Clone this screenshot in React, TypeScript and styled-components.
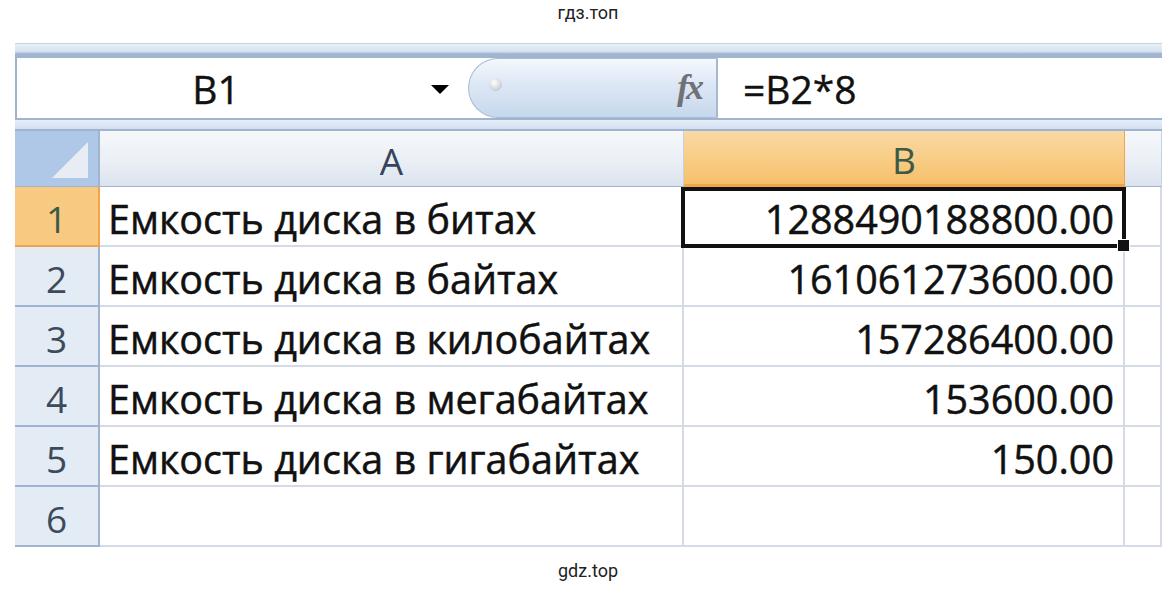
import styled, { createGlobalStyle } from 'styled-components';

const Global = createGlobalStyle`
  html, body {
    margin: 0;
    padding: 0;
    background: #fff;
  }
  body {
    font-family: "Open Sans", "Liberation Sans", sans-serif;
  }
`;

const Page = styled.div`
  width: 1176px;
  height: 590px;
  display: flex;
  flex-direction: column;
  overflow: hidden;
`;

const Watermark = styled.div`
  height: 43px;
  display: flex;
  justify-content: center;
  padding-top: 2px;
  box-sizing: border-box;
  font-family: Roboto, "Liberation Sans", sans-serif;
  font-size: 18px;
  color: #222;
`;

const Footer = styled.div`
  flex: 1;
  display: flex;
  justify-content: center;
  padding-top: 13px;
  box-sizing: border-box;
  font-family: Roboto, "Liberation Sans", sans-serif;
  font-size: 18px;
  color: #222;
`;

const Sheet = styled.div`
  margin-left: 15px;
  width: 1147px;
  display: flex;
  flex-direction: column;
`;

const TopStrip = styled.div`
  height: 15px;
  background: linear-gradient(#e9f0f9 0%, #d4e0ef 55%, #9fb4cf 70%, #9fb4cf 100%);
  border-top: 1px solid #c3d2e5;
  box-sizing: border-box;
`;

const FormulaRow = styled.div`
  height: 60px;
  display: flex;
  background: #fff;
  border-left: 2px solid #9fb4cf;
  box-sizing: border-box;
`;

const NameBox = styled.div`
  width: 451px;
  display: flex;
  align-items: center;
  box-sizing: border-box;
  font-size: 39px;
  color: #111;
  -webkit-text-stroke: 0.4px #111;
`;

const NameText = styled.div`
  width: 398px;
  text-align: center;
`;

const Arrow = styled.div`
  width: 0;
  height: 0;
  margin-left: 16px;
  margin-top: 2px;
  border-left: 9px solid transparent;
  border-right: 9px solid transparent;
  border-top: 9px solid #000;
`;

const Pill = styled.div`
  width: 250px;
  display: flex;
  align-items: center;
  justify-content: space-between;
  padding: 0 12px 0 20px;
  box-sizing: border-box;
  border-radius: 30px 0 0 30px;
  border: 1px solid #a9bcd5;
  border-right: 2px solid #a5b8d0;
  background: linear-gradient(#f4f8fd 0%, #dfe9f6 40%, #c6d7ec 100%);
`;

const Knob = styled.div`
  width: 13px;
  height: 13px;
  border-radius: 50%;
  margin-top: -8px;
  background: radial-gradient(circle at 40% 35%, #ffffff 0%, #d6d9de 55%, #a9afb8 100%);
`;

const Fx = styled.div`
  font-family: "Liberation Serif", "DejaVu Serif", serif;
  font-style: italic;
  font-weight: bold;
  font-size: 36px;
  letter-spacing: -3px;
  padding-right: 3px;
  color: #707276;
  margin-top: -2px;
`;

const FormulaText = styled.div`
  flex: 1;
  display: flex;
  align-items: center;
  padding-left: 25px;
  font-size: 39px;
  color: #111;
  -webkit-text-stroke: 0.4px #111;
`;

const Band = styled.div`
  height: 13px;
  border-top: 2px solid #9fb4cf;
  border-bottom: 2px solid #9fb4cf;
  background: linear-gradient(#e6eef8, #d2dff0);
  box-sizing: border-box;
`;

const Grid = styled.div`
  display: grid;
  grid-template-columns: 85px 584px 441px 37px;
  grid-template-rows: 56px repeat(6, 60px);
`;

const Corner = styled.div`
  position: relative;
  background: #b0c8e8;
  border-right: 2px solid #9fb4cf;
  border-bottom: 1px solid #9fb4cf;
  box-sizing: border-box;
  &::after {
    content: '';
    position: absolute;
    right: 10px;
    bottom: 8px;
    width: 0;
    height: 0;
    border-left: 36px solid transparent;
    border-bottom: 36px solid #e8edf4;
  }
`;

const ColHead = styled.div<{ $active?: boolean }>`
  display: flex;
  align-items: center;
  justify-content: center;
  padding-top: 3px;
  font-size: 37px;
  color: ${p => (p.$active ? '#3c5a47' : '#34445a')};
  box-sizing: border-box;
  border-right: 1px solid ${p => (p.$active ? '#f2a44a' : '#c5d2e3')};
  border-bottom: ${p => (p.$active ? '3px solid #f2a44a' : '1px solid #9fb4cf')};
  background: ${p =>
    p.$active
      ? 'linear-gradient(#f9d9a6 0%, #f8cd87 50%, #f6c06a 100%)'
      : 'linear-gradient(#f6f8fb 0%, #e9eef5 60%, #dbe3ee 100%)'};
`;

const RowHead = styled.div<{ $active?: boolean }>`
  display: flex;
  align-items: center;
  justify-content: center;
  padding-top: 4px;
  font-size: 37px;
  color: ${p => (p.$active ? '#3c5a47' : '#3d4a5c')};
  box-sizing: border-box;
  border-right: 2px solid ${p => (p.$active ? '#f2a44a' : '#9fb4cf')};
  border-bottom: 2px solid ${p => (p.$active ? '#f2a44a' : '#9fb4cf')};
  background: ${p => (p.$active ? '#f8c980' : '#e3ebf5')};
`;

const Cell = styled.div<{ $num?: boolean }>`
  position: relative;
  display: flex;
  align-items: center;
  justify-content: ${p => (p.$num ? 'flex-end' : 'flex-start')};
  padding: ${p => (p.$num ? '5px 9px 0 0' : '5px 0 0 8px')};
  font-size: 39.5px;
  color: #111;
  -webkit-text-stroke: 0.5px #111;
  white-space: nowrap;
  box-sizing: border-box;
  border-right: 2px solid #d4dbe6;
  border-bottom: 2px solid #d4dbe6;
  background: #fff;
`;

const Selection = styled.div`
  position: absolute;
  z-index: 2;
  left: -3px;
  top: 0;
  right: -3px;
  bottom: -3px;
  border: 4px solid #111;
  pointer-events: none;
  &::after {
    content: '';
    position: absolute;
    right: -8px;
    bottom: -8px;
    width: 11px;
    height: 11px;
    background: #111;
    border: 1px solid #fff;
  }
`;

const rows: [string, string][] = [
  ['Емкость диска в битах', '1288490188800.00'],
  ['Емкость диска в байтах', '161061273600.00'],
  ['Емкость диска в килобайтах', '157286400.00'],
  ['Емкость диска в мегабайтах', '153600.00'],
  ['Емкость диска в гигабайтах', '150.00'],
  ['', ''],
];

export default function App() {
  return (
    <Page>
      <Global />
      <Watermark>гдз.топ</Watermark>
      <Sheet>
        <TopStrip />
        <FormulaRow>
          <NameBox>
            <NameText>B1</NameText>
            <Arrow />
          </NameBox>
          <Pill>
            <Knob />
            <Fx>fx</Fx>
          </Pill>
          <FormulaText>=B2*8</FormulaText>
        </FormulaRow>
        <Band />
        <Grid>
          <Corner />
          <ColHead>A</ColHead>
          <ColHead $active>B</ColHead>
          <ColHead />
          {rows.map(([label, value], i) => (
            <Row key={i} n={i + 1} label={label} value={value} />
          ))}
        </Grid>
      </Sheet>
      <Footer>gdz.top</Footer>
    </Page>
  );
}

function Row({ n, label, value }: { n: number; label: string; value: string }) {
  return (
    <>
      <RowHead $active={n === 1}>{n}</RowHead>
      <Cell>{label}</Cell>
      <Cell $num>
        {value}
        {n === 1 && <Selection />}
      </Cell>
      <Cell />
    </>
  );
}
